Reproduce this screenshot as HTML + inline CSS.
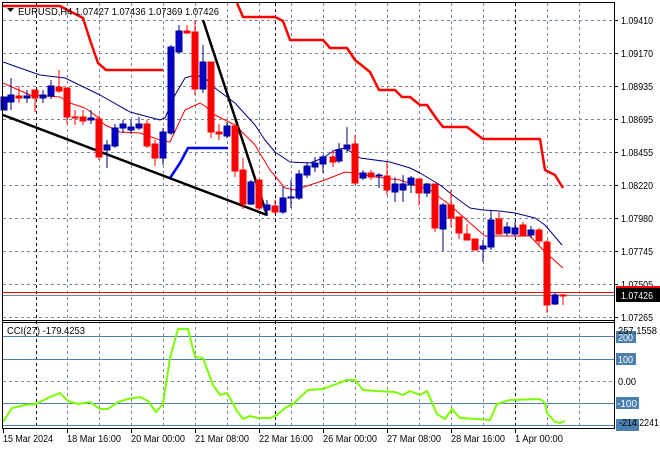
<!DOCTYPE html>
<html><head><meta charset="utf-8"><style>
html,body{margin:0;padding:0;background:#fff}
svg{display:block;font-family:"Liberation Sans",sans-serif;font-size:10.5px}
</style></head><body>
<svg width="660" height="450" viewBox="0 0 660 450" xmlns="http://www.w3.org/2000/svg">
<rect width="660" height="450" fill="#fff"/>
<g stroke="#7a8796" stroke-dasharray="3,3" stroke-width="1">
<path d="M3 20.5H614M3 53.5H614M3 86.5H614M3 119.5H614M3 152.5H614M3 185.5H614M3 218.5H614M3 251.5H614M3 284.5H614M3 317.5H614M3 381.5H614"/>
<path d="M67.5 3V428M99.5 3V428M131.5 3V428M163.5 3V428M195.5 3V428M227.5 3V428M259.5 3V428M291.5 3V428M323.5 3V428M355.5 3V428M387.5 3V428M419.5 3V428M451.5 3V428M483.5 3V428M547.5 3V428M579.5 3V428"/>
</g>
<g stroke="#000" stroke-dasharray="3,3"><path d="M36.5 3V428M275.5 3V428M515.5 3V428"/></g>
<g stroke="#4a7fb0"><path d="M3 336.5H614M3 359.5H614M3 403.5H614M3 425.5H614"/></g>
<path d="M3 292.5H614" stroke="#f00"/>
<path d="M3 295.5H614" stroke="#7a8796"/>
<g fill="none" stroke-linejoin="round">
<path d="M3 6H60L83 18L90 40L98 63L106 70H163" stroke="#f00" stroke-width="2.5"/>
<path d="M237 3L243 17H275L283 21L290 40H323L330 48H347L355 60L370 72L379 90H395L402 97H410L420 105H427L436 118L443 127H467L483 139H540L545 170L555 175L563 188" stroke="#f00" stroke-width="2.5"/>
<path d="M170 178L180 163L188 148H228" stroke="#0000ff" stroke-width="2.5"/>
<path d="M3 62L40 75L65 78L100 95L130 112L160 120L165 118L175 95L185 78L195 75L205 78L215 88L235 103L255 125L265 140L275 152L290 162L310 163L323 158L335 150L345 148L360 158L390 162L410 168L420 173L440 185L455 197L470 208L483 210L500 211L515 213L535 218L545 225L562 245" stroke="#000080" stroke-width="1"/>
<path d="M3 83L30 95L60 97L70 103L85 108L95 115L105 125L120 132L140 133L160 140L170 142L185 110L200 103L205 106L215 115L235 125L255 145L270 170L285 188L295 190L310 185L325 180L345 172L355 173L375 177L400 180L430 190L450 205L470 223L485 236L530 236L545 252L563 268" stroke="#f00" stroke-width="1"/>
<path d="M3 115L267 215M203 20L267 215" stroke="#000" stroke-width="2.5"/>
</g>
<g stroke-width="1">
<g stroke="#00008b" fill="#0000cd">
<path d="M11 78V110M27 90V103M43 90V103M51 80V99M91 110V124M107 140V168M115 124V148M123 120V133M131 120V134M139 117V130M163 128V165M171 45V135M179 25V53M203 45V93M227 122V138M251 180V205M267 200V216M283 186V214M291 180V208M299 170V200M307 162V178M315 157V172M323 155V173M339 143V163M347 127V152M363 170V180M379 173V188M395 177V202M403 175V202M411 176V193M427 183V197M443 203V251M483 240V262M491 210V250M507 222V236M515 222V236M531 226V238M555 292V305"/>
<rect x="1" y="97" width="6" height="13"/><rect x="8" y="95" width="6" height="7"/><rect x="24" y="96" width="6" height="2"/><rect x="40" y="95" width="6" height="3"/><rect x="48" y="86" width="6" height="10"/><rect x="88" y="118" width="6" height="2"/><rect x="104" y="145" width="6" height="5"/><rect x="112" y="128" width="6" height="18"/><rect x="120" y="124" width="6" height="4"/><rect x="128" y="127" width="6" height="3"/><rect x="136" y="124" width="6" height="4"/><rect x="160" y="132" width="6" height="26"/><rect x="168" y="47" width="6" height="86"/><rect x="176" y="31" width="6" height="21"/><rect x="200" y="62" width="6" height="27"/><rect x="224" y="126" width="6" height="10"/><rect x="248" y="182" width="6" height="22"/><rect x="264" y="205" width="6" height="5"/><rect x="280" y="198" width="6" height="14"/><rect x="288" y="197" width="6" height="1"/><rect x="296" y="174" width="6" height="24"/><rect x="304" y="166" width="6" height="9"/><rect x="312" y="163" width="6" height="4"/><rect x="320" y="157" width="6" height="7"/><rect x="336" y="150" width="6" height="11"/><rect x="344" y="145" width="6" height="4"/><rect x="360" y="173" width="6" height="5"/><rect x="376" y="175" width="6" height="1"/><rect x="392" y="184" width="6" height="8"/><rect x="400" y="184" width="6" height="6"/><rect x="408" y="178" width="6" height="7"/><rect x="424" y="184" width="6" height="9"/><rect x="440" y="205" width="6" height="24"/><rect x="480" y="246" width="6" height="3"/><rect x="488" y="220" width="6" height="27"/><rect x="504" y="227" width="6" height="6"/><rect x="512" y="228" width="6" height="6"/><rect x="528" y="230" width="6" height="5"/><rect x="552" y="295" width="6" height="9"/>
</g>
<g stroke="#f00" fill="#f00">
<path d="M19 86V103M35 90V112M59 70V93M67 88V124M75 110V125M83 110V125M99 115V160M147 120V148M155 140V166M187 25V33M195 20V95M211 62V138M219 124V140M235 126V177M243 158V209M259 180V210M275 200V214M333 150V167M355 135V185M371 170V180M387 162V195M419 179V206M435 184V232M451 190V227M459 217V239M467 224V240M475 239V250M499 212V234M523 222V236M539 228V245M547 240V313M563 294V305"/>
<rect x="16" y="96" width="6" height="2"/><rect x="32" y="90" width="6" height="8"/><rect x="56" y="87" width="6" height="4"/><rect x="64" y="88" width="6" height="29"/><rect x="72" y="117" width="6" height="1"/><rect x="80" y="117" width="6" height="4"/><rect x="96" y="119" width="6" height="38"/><rect x="144" y="124" width="6" height="22"/><rect x="152" y="144" width="6" height="14"/><rect x="184" y="31" width="6" height="2"/><rect x="192" y="32" width="6" height="57"/><rect x="208" y="62" width="6" height="70"/><rect x="216" y="132" width="6" height="2"/><rect x="232" y="126" width="6" height="45"/><rect x="240" y="170" width="6" height="34"/><rect x="256" y="180" width="6" height="28"/><rect x="272" y="206" width="6" height="6"/><rect x="330" y="157" width="6" height="5"/><rect x="352" y="144" width="6" height="39"/><rect x="368" y="173" width="6" height="4"/><rect x="384" y="176" width="6" height="14"/><rect x="416" y="179" width="6" height="14"/><rect x="432" y="184" width="6" height="44"/><rect x="448" y="205" width="6" height="13"/><rect x="456" y="217" width="6" height="16"/><rect x="464" y="234" width="6" height="6"/><rect x="472" y="239" width="6" height="11"/><rect x="496" y="219" width="6" height="15"/><rect x="520" y="225" width="6" height="10"/><rect x="536" y="230" width="6" height="11"/><rect x="544" y="242" width="6" height="63"/><rect x="560" y="295" width="6" height="1"/>
</g>
</g>
<path d="M3 422L12 408L25 405L36 404L50 397L60 393L68 401L78 404L90 402L100 409L108 409L118 402L128 399L140 397L148 401L156 412L163 404L170 358L178 329L188 329L195 357L203 358L213 385L220 395L227 393L237 411L243 419L250 416L258 418L270 418L277 415L285 408L293 404L308 390L323 389L347 380L355 380L363 390L375 391L395 392L403 395L410 391L420 395L427 391L437 414L445 419L452 409L460 418L477 419L490 420L497 404L510 400L540 399L545 403L547 413L555 422L560 423L565 421" fill="none" stroke="#7cfc00" stroke-width="2"/>
<g stroke="#000" fill="none">
<path d="M2.5 2V428.5M2 2.5H614.5M614.5 2V428.5M2 320.5H615M2 322.5H615M2 428.5H615"/>
<path d="M3.5 429V433M67.5 429V433M131.5 429V433M195.5 429V433M259.5 429V433M323.5 429V433M387.5 429V433M451.5 429V433M515.5 429V433M614 20.5H618M614 53.5H618M614 86.5H618M614 119.5H618M614 152.5H618M614 185.5H618M614 218.5H618M614 251.5H618M614 284.5H618M614 317.5H618"/>
</g>
<path d="M7 8H14L10.5 12Z" fill="#000"/>
<text x="18" y="15" fill="#000" textLength="201" lengthAdjust="spacingAndGlyphs">EURUSD,H4  1.07427 1.07436 1.07369 1.07426</text>
<text x="7" y="334" fill="#000" textLength="78" lengthAdjust="spacingAndGlyphs">CCI(27) -179.4253</text>
<g fill="#000">
<text x="621" y="24" textLength="32" lengthAdjust="spacingAndGlyphs">1.09410</text><text x="621" y="57" textLength="32" lengthAdjust="spacingAndGlyphs">1.09170</text><text x="621" y="90" textLength="32" lengthAdjust="spacingAndGlyphs">1.08935</text><text x="621" y="123" textLength="32" lengthAdjust="spacingAndGlyphs">1.08695</text><text x="621" y="156" textLength="32" lengthAdjust="spacingAndGlyphs">1.08455</text><text x="621" y="189" textLength="32" lengthAdjust="spacingAndGlyphs">1.08220</text><text x="621" y="222" textLength="32" lengthAdjust="spacingAndGlyphs">1.07980</text><text x="621" y="255" textLength="32" lengthAdjust="spacingAndGlyphs">1.07745</text><text x="621" y="288" textLength="32" lengthAdjust="spacingAndGlyphs">1.07505</text><text x="621" y="321" textLength="32" lengthAdjust="spacingAndGlyphs">1.07265</text>
</g>
<rect x="616" y="286" width="44" height="6" fill="#f00"/>
<rect x="616" y="288" width="44" height="14" fill="#000"/>
<text x="621" y="299" fill="#fff" textLength="32" lengthAdjust="spacingAndGlyphs">1.07426</text>
<rect x="616" y="331" width="20" height="12" fill="#4a7fb0"/>
<rect x="616" y="353" width="20" height="12" fill="#4a7fb0"/>
<rect x="616" y="397" width="23" height="12" fill="#4a7fb0"/>
<rect x="616" y="419" width="23" height="12" fill="#4a7fb0"/>
<text x="618" y="334" fill="#000" textLength="39" lengthAdjust="spacingAndGlyphs">257.1558</text>
<text x="618" y="341" fill="#fff" textLength="15" lengthAdjust="spacingAndGlyphs">200</text>
<text x="618" y="363" fill="#fff" textLength="15" lengthAdjust="spacingAndGlyphs">100</text>
<text x="618" y="385" fill="#000" textLength="18" lengthAdjust="spacingAndGlyphs">0.00</text>
<text x="617" y="407" fill="#fff" textLength="20" lengthAdjust="spacingAndGlyphs">-100</text>
<text x="619" y="426" fill="#000" textLength="40" lengthAdjust="spacingAndGlyphs">-214.2241</text>
<g fill="#000">
<text x="3" y="442" textLength="50" lengthAdjust="spacingAndGlyphs">15 Mar 2024</text><text x="67" y="442" textLength="54" lengthAdjust="spacingAndGlyphs">18 Mar 16:00</text><text x="131" y="442" textLength="54" lengthAdjust="spacingAndGlyphs">20 Mar 00:00</text><text x="195" y="442" textLength="54" lengthAdjust="spacingAndGlyphs">21 Mar 08:00</text><text x="259" y="442" textLength="54" lengthAdjust="spacingAndGlyphs">22 Mar 16:00</text><text x="323" y="442" textLength="54" lengthAdjust="spacingAndGlyphs">26 Mar 00:00</text><text x="387" y="442" textLength="54" lengthAdjust="spacingAndGlyphs">27 Mar 08:00</text><text x="451" y="442" textLength="54" lengthAdjust="spacingAndGlyphs">28 Mar 16:00</text><text x="515" y="442" textLength="48" lengthAdjust="spacingAndGlyphs">1 Apr 00:00</text>
</g>
</svg>
</body></html>
